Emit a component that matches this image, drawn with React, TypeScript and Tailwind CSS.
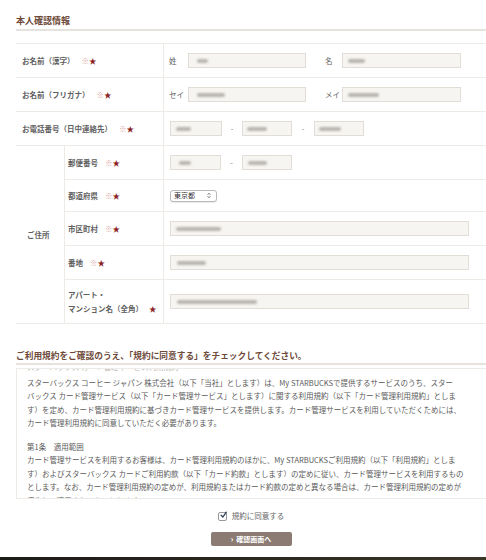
import React from 'react'

const Req = ({ mark = true }: { mark?: boolean }) => (
  <span className="ml-[7px]">
    {mark && <span className="text-[#d9a3a3]">※</span>}
    <span className="text-[#8a2323]">★</span>
  </span>
)

const Blob = ({ w, ml = 5 }: { w: number; ml?: number }) => (
  <div
    className="h-[4px] rounded-sm bg-[#b9b5b1] blur-[1px]"
    style={{ width: w, marginLeft: ml }}
  />
)

const Field = ({ w, blob, ml }: { w: string; blob: number; ml?: number }) => (
  <div className={`flex h-[15px] items-center border border-[#e2ded7] bg-[#f7f5f1] ${w}`}>
    <Blob w={blob} ml={ml} />
  </div>
)

const Dash = ({ w }: { w: string }) => <span className={`text-center text-[#777] ${w}`}>-</span>

export default function App() {
  return (
    <div className="flex h-[560px] w-[486px] flex-col overflow-hidden bg-white font-['Noto_Sans_CJK_JP','Noto_Sans',sans-serif] text-[7.5px] text-[#5f5f5f]">
      <div className="pl-4">
        {/* section 1 */}
        <h2 className="pt-[15px] text-[9px] font-bold leading-[12px] text-[#6e4a3a]">本人確認情報</h2>
        <div className="mt-[2px] h-[2px] bg-[#e6e3de]" />

        <div className="mt-[12px] border-t border-[#eeebe6]">
          {/* お名前（漢字） */}
          <div className="grid h-[34px] grid-cols-[148px_1fr] border-b border-[#eeebe6]">
            <div className="flex items-center border-r border-[#eeebe6] pl-[6px] font-semibold">
              お名前（漢字）<Req />
            </div>
            <div className="flex items-center pl-[5px]">
              <span className="w-[19px]">姓</span>
              <Field w="w-[118px]" blob={11} ml={8} />
              <span className="ml-[19px] w-[17px]">名</span>
              <Field w="w-[119px]" blob={17} ml={5} />
            </div>
          </div>

          {/* お名前（フリガナ） */}
          <div className="grid h-[34px] grid-cols-[148px_1fr] border-b border-[#eeebe6]">
            <div className="flex items-center border-r border-[#eeebe6] pl-[6px] font-semibold">
              お名前（フリガナ）<Req />
            </div>
            <div className="flex items-center pl-[5px]">
              <span className="w-[19px]">セイ</span>
              <Field w="w-[118px]" blob={28} ml={8} />
              <span className="ml-[19px] w-[17px]">メイ</span>
              <Field w="w-[119px]" blob={31} ml={5} />
            </div>
          </div>

          {/* お電話番号 */}
          <div className="grid h-[34px] grid-cols-[148px_1fr] border-b border-[#eeebe6]">
            <div className="flex items-center border-r border-[#eeebe6] pl-[6px] font-semibold">
              お電話番号（日中連絡先）<Req />
            </div>
            <div className="flex items-center pl-[6px]">
              <Field w="w-[52px]" blob={15} />
              <Dash w="w-[20px]" />
              <Field w="w-[50px]" blob={20} ml={4} />
              <Dash w="w-[22px]" />
              <Field w="w-[50px]" blob={22} ml={4} />
            </div>
          </div>

          {/* ご住所 */}
          <div className="flex border-b border-[#eeebe6]">
            <div className="flex w-[49px] items-center border-r border-[#eeebe6] pl-[11px] font-semibold">ご住所</div>
            <div className="flex flex-1 flex-col">
              <div className="grid h-[34px] grid-cols-[99px_1fr] border-b border-[#eeebe6]">
                <div className="flex items-center border-r border-[#eeebe6] pl-[3px] font-semibold">
                  郵便番号<Req />
                </div>
                <div className="flex items-center pl-[6px]">
                  <Field w="w-[51px]" blob={12} ml={8} />
                  <Dash w="w-[21px]" />
                  <Field w="w-[50px]" blob={19} ml={5} />
                </div>
              </div>
              <div className="grid h-[32px] grid-cols-[99px_1fr] border-b border-[#eeebe6]">
                <div className="flex items-center border-r border-[#eeebe6] pl-[3px] font-semibold">
                  都道府県<Req />
                </div>
                <div className="flex items-center pl-[6px]">
                  <div className="flex h-[12px] w-[47px] items-center justify-between rounded-[3px] border border-[#b9b9b9] bg-white pr-[5px] pl-[3px] text-[7px] leading-none text-[#333] shadow-[0_1px_1px_rgba(0,0,0,0.08)]">
                    <span>東京都</span>
                    <svg viewBox="0 0 6 10" className="h-[7px] w-[4px]">
                      <path d="M1 4 L3 1.5 L5 4 M1 6 L3 8.5 L5 6" fill="none" stroke="#555" strokeWidth="1.1" />
                    </svg>
                  </div>
                </div>
              </div>
              <div className="grid h-[34px] grid-cols-[99px_1fr] border-b border-[#eeebe6]">
                <div className="flex items-center border-r border-[#eeebe6] pl-[3px] font-semibold">
                  市区町村<Req />
                </div>
                <div className="flex items-center pl-[6px]">
                  <Field w="w-[299px]" blob={45} />
                </div>
              </div>
              <div className="grid h-[34px] grid-cols-[99px_1fr] border-b border-[#eeebe6]">
                <div className="flex items-center border-r border-[#eeebe6] pl-[3px] font-semibold">
                  番地<Req />
                </div>
                <div className="flex items-center pl-[6px]">
                  <Field w="w-[299px]" blob={29} ml={6} />
                </div>
              </div>
              <div className="grid h-[43px] grid-cols-[99px_1fr]">
                <div className="flex flex-col justify-center border-r border-[#eeebe6] pl-[3px] font-semibold leading-[14px]">
                  <span>アパート・</span>
                  <span>
                    マンション名（全角）<span className="ml-[6px] text-[#8a2323]">★</span>
                  </span>
                </div>
                <div className="flex items-center pl-[6px]">
                  <Field w="w-[299px]" blob={80} ml={6} />
                </div>
              </div>
            </div>
          </div>
        </div>

        {/* section 2 */}
        <h2 className="mt-[26px] text-[8.7px] font-bold leading-[12px] text-[#6e4a3a]">
          ご利用規約をご確認のうえ、「規約に同意する」をチェックしてください。
        </h2>
        <div className="mt-[1px] h-[2px] bg-[#e6e3de]" />

        <div className="mt-[3px] h-[131px] overflow-hidden border-y border-l border-[#eeebe6] leading-[13.5px] text-[#5a5a5a]">
          <div className="px-[10px] whitespace-nowrap">
            <div className="-mt-[9px] h-[13.5px] text-[#b5b5b5]">スターバックス カード管理サービス利用規約</div>
            <div className="mt-[2px]">
              <div>スターバックス コーヒー ジャパン 株式会社（以下「当社」とします）は、My STARBUCKSで提供するサービスのうち、スター</div>
              <div>バックス カード管理サービス（以下「カード管理サービス」とします）に関する利用規約（以下「カード管理利用規約」としま</div>
              <div>す）を定め、カード管理利用規約に基づきカード管理サービスを提供します。カード管理サービスを利用していただくためには、</div>
              <div>カード管理利用規約に同意していただく必要があります。</div>
            </div>
            <div className="mt-[10px]">
              <div>第1条　適用範囲</div>
              <div>カード管理サービスを利用するお客様は、カード管理利用規約のほかに、My STARBUCKSご利用規約（以下「利用規約」としま</div>
              <div>す）およびスターバックス カードご利用約款（以下「カード約款」とします）の定めに従い、カード管理サービスを利用するもの</div>
              <div>とします。なお、カード管理利用規約の定めが、利用規約またはカード約款の定めと異なる場合は、カード管理利用規約の定めが</div>
              <div>優先して適用されるものとします。</div>
            </div>
          </div>
        </div>

        <label className="mt-[12px] flex items-center justify-center gap-[5px] leading-[10px]">
          <span className="flex h-[9px] w-[9px] items-center justify-center rounded-[2px] border border-[#999] bg-white">
            <svg viewBox="0 0 10 10" className="h-[10px] w-[10px] -translate-y-[1px] translate-x-[1px]">
              <path d="M1.5 5.2 L4 8 L9 1" fill="none" stroke="#2f3b57" strokeWidth="1.8" strokeLinecap="round" strokeLinejoin="round" />
            </svg>
          </span>
          <span className="text-[#666]">規約に同意する</span>
        </label>

        <div className="mt-[11px] flex justify-center">
          <button className="flex h-[14px] w-[81px] items-center justify-center gap-[3px] rounded-[2px] bg-[#8b7b72] text-[7px] font-bold text-white">
            <span className="text-[8px] leading-none">›</span>
            <span>確認画面へ</span>
          </button>
        </div>
      </div>

      <div className="mt-auto h-[3px] bg-gradient-to-r from-[#1d1b18] via-[#2a2720] to-[#3a3526]" />
    </div>
  )
}
